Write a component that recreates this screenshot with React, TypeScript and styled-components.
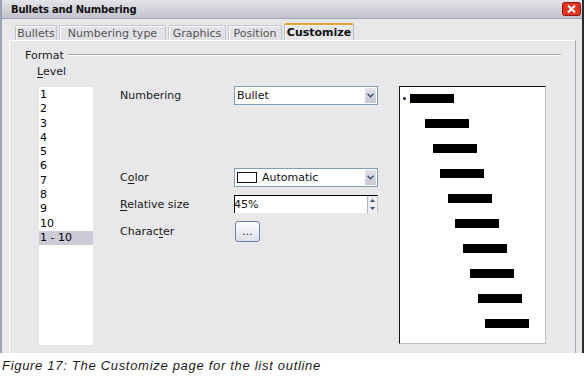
import React from "react";
import styled, { createGlobalStyle } from "styled-components";

const GlobalStyle = createGlobalStyle`
  html, body {
    margin: 0;
    padding: 0;
    background: #ffffff;
  }
  body {
    font-family: "DejaVu Sans", "Noto Sans", sans-serif;
    font-size: 11px;
    color: #1a1a1a;
  }
`;

const Page = styled.div`
  width: 585px;
  height: 383px;
  overflow: hidden;
`;

const Window = styled.div`
  box-sizing: border-box;
  width: 584px;
  height: 353px;
  border-left: 2px solid #9ca2b8;
  border-right: 2px solid #2a2a2a;
  background: #e8e8eb;
  display: flex;
  flex-direction: column;
`;

const TitleBar = styled.div`
  box-sizing: border-box;
  height: 19px;
  display: flex;
  align-items: center;
  justify-content: space-between;
  padding: 0 1px 0 9px;
  background: linear-gradient(#e4e4ea, #c2c2ce);
  border-bottom: 1px solid #a4a4b4;
  font-weight: bold;
  font-size: 10px;
  letter-spacing: -0.2px;
  color: #111;
`;

const CloseIcon = styled.svg`
  display: block;
  flex: none;
`;

const TabRow = styled.div`
  display: flex;
  align-items: flex-end;
  gap: 2px;
  height: 17px;
  margin-top: 4px;
  padding-left: 13px;
`;

const Tab = styled.div<{ $active?: boolean; $w: number }>`
  box-sizing: border-box;
  width: ${({ $w }) => $w}px;
  height: ${({ $active }) => ($active ? "17px" : "15px")};
  display: flex;
  align-items: center;
  justify-content: center;
  font-weight: ${({ $active }) => ($active ? "bold" : "normal")};
  color: ${({ $active }) => ($active ? "#111" : "#555")};
  background: ${({ $active }) => ($active ? "#e8e8eb" : "#e2e2e6")};
  border: 1px solid ${({ $active }) => ($active ? "#b8b8c0" : "#c4c4cc")};
  border-top: ${({ $active }) => ($active ? "2px solid #f0a030" : "1px solid #c4c4cc")};
  border-bottom: none;
  border-radius: 2px 2px 0 0;
  box-shadow: inset 1px 1px 0 #ffffff;
`;

const Panel = styled.div`
  flex: 1;
  margin: 0 6px 0 7px;
  border-top: 1px solid #ffffff;
  border-left: 1px solid #ffffff;
  border-right: 1px solid #a8a8b0;
  padding: 7px 14px 0 15px;
  display: flex;
  flex-direction: column;
`;

const FrameHeader = styled.div`
  display: flex;
  align-items: center;
  gap: 4px;
  height: 14px;
`;

const FrameLine = styled.div`
  flex: 1;
  border-top: 1px solid #a4a4a8;
  border-bottom: 1px solid #ffffff;
`;

const LevelLabel = styled.div`
  height: 14px;
  line-height: 14px;
  margin: 3px 0 0 12px;
`;

const MainRow = styled.div`
  display: flex;
  align-items: flex-start;
  margin-top: 7px;
`;

const LevelList = styled.div`
  width: 54px;
  height: 258px;
  margin: 1px 0 0 14px;
  padding-top: 1px;
  box-sizing: border-box;
  background: #ffffff;
`;

const LevelItem = styled.div<{ $selected?: boolean }>`
  height: 14.3px;
  line-height: 14.3px;
  padding-left: 1px;
  color: #000;
  background: ${({ $selected }) => ($selected ? "#cbcbd8" : "transparent")};
`;

const Form = styled.div`
  display: flex;
  flex-direction: column;
  margin-left: 27px;
  width: 258px;
`;

const FormRow = styled.div<{ $gap: number; $h: number }>`
  display: grid;
  grid-template-columns: 114px 144px;
  align-items: center;
  height: ${({ $h }) => $h}px;
  margin-top: ${({ $gap }) => $gap}px;
`;

const Mnemonic = styled.span`
  text-decoration: underline;
  text-underline-offset: 2px;
`;

const SelectBox = styled.div`
  box-sizing: border-box;
  height: 19px;
  border: 1px solid #7f9db9;
  background: #ffffff;
  display: flex;
  align-items: center;
  padding: 0 1px 0 2px;
`;

const SelectText = styled.div`
  flex: 1;
  display: flex;
  align-items: center;
  gap: 5px;
  color: #111;
`;

const Swatch = styled.div`
  box-sizing: border-box;
  width: 20px;
  height: 11px;
  border: 1px solid #111;
  background: #fff;
`;

const DropButton = styled.div`
  width: 11px;
  height: 15px;
  background: linear-gradient(#e4e4ec, #c8c8d6);
  display: flex;
  align-items: center;
  justify-content: center;
`;

const SpinBox = styled.div`
  box-sizing: border-box;
  height: 18px;
  border-top: 1px solid #000;
  border-left: 1px solid #000;
  border-right: 1px solid #c8c8cc;
  background: #ffffff;
  display: flex;
  align-items: center;
`;

const SpinText = styled.div`
  flex: 1;
  text-indent: -1px;
  color: #111;
`;

const SpinButtons = styled.div`
  width: 9px;
  height: 100%;
  display: flex;
  flex-direction: column;
  border-left: 1px solid #b4b4bc;
  background: #eeeef2;
`;

const SpinHalf = styled.div`
  flex: 1;
  display: flex;
  align-items: center;
  justify-content: center;
`;

const DotsButton = styled.div`
  box-sizing: border-box;
  width: 25px;
  height: 21px;
  margin-left: 1px;
  border: 1px solid #6c80a8;
  border-radius: 3px;
  background: linear-gradient(#ffffff, #dde0ea);
  display: flex;
  align-items: center;
  justify-content: center;
  font-size: 11px;
  color: #222;
`;

const Preview = styled.div`
  box-sizing: border-box;
  width: 147px;
  height: 258px;
  margin-left: 21px;
  background: #ffffff;
  border-top: 1px solid #111;
  border-left: 1px solid #111;
  border-right: 1px solid #c0c0c4;
  border-bottom: 1px solid #c0c0c4;
  padding-top: 7px;
  display: flex;
  flex-direction: column;
  gap: 16px;
`;

const PreviewLine = styled.div<{ $indent: number }>`
  display: flex;
  align-items: center;
  height: 9px;
  padding-left: ${({ $indent }) => $indent}px;
`;

const BulletDot = styled.div`
  width: 3px;
  height: 3px;
  margin-left: 3px;
  margin-right: 4px;
  border-radius: 50%;
  background: #102040;
`;

const Bar = styled.div`
  width: 44px;
  height: 9px;
  background: #000;
`;

const Caption = styled.div`
  margin-top: 6px;
  padding-left: 2px;
  height: 14px;
  line-height: 14px;
  font-family: "Liberation Sans", Arial, sans-serif;
  font-style: italic;
  font-size: 13px;
  letter-spacing: 0.7px;
  color: #1a1a1a;
`;

const Chevron = () => (
  <svg width="7" height="5" viewBox="0 0 7 5">
    <path d="M0.5 0.8 L3.5 3.8 L6.5 0.8" fill="none" stroke="#3a4a6a" strokeWidth="1.3" />
  </svg>
);

const levels = ["1", "2", "3", "4", "5", "6", "7", "8", "9", "10", "1 - 10"];
const tabs = [
  { label: "Bullets", w: 42 },
  { label: "Numbering type", w: 107 },
  { label: "Graphics", w: 58 },
  { label: "Position", w: 54 },
  { label: "Customize", w: 70 },
];

export default function App() {
  return (
    <Page>
      <GlobalStyle />
      <Window>
        <TitleBar>
          <span>Bullets and Numbering</span>
          <CloseIcon width="19" height="14" viewBox="0 0 19 14">
            <rect x="0.5" y="0.5" width="18" height="13" rx="2" fill="#e0321f" stroke="#901a10" />
            <path d="M6 3.5 L13 10.5 M13 3.5 L6 10.5" stroke="#ffffff" strokeWidth="2" />
          </CloseIcon>
        </TitleBar>
        <TabRow>
          {tabs.map((t) => (
            <Tab key={t.label} $w={t.w} $active={t.label === "Customize"}>
              {t.label}
            </Tab>
          ))}
        </TabRow>
        <Panel>
          <FrameHeader>
            <span>Format</span>
            <FrameLine />
          </FrameHeader>
          <LevelLabel>
            <Mnemonic>L</Mnemonic>evel
          </LevelLabel>
          <MainRow>
            <LevelList>
              {levels.map((l) => (
                <LevelItem key={l} $selected={l === "1 - 10"}>
                  {l}
                </LevelItem>
              ))}
            </LevelList>
            <Form>
              <FormRow $gap={0} $h={19}>
                <span>Numbering</span>
                <SelectBox>
                  <SelectText>Bullet</SelectText>
                  <DropButton>
                    <Chevron />
                  </DropButton>
                </SelectBox>
              </FormRow>
              <FormRow $gap={63} $h={19}>
                <span>
                  C<Mnemonic>o</Mnemonic>lor
                </span>
                <SelectBox>
                  <SelectText>
                    <Swatch />
                    Automatic
                  </SelectText>
                  <DropButton>
                    <Chevron />
                  </DropButton>
                </SelectBox>
              </FormRow>
              <FormRow $gap={8} $h={18}>
                <span>
                  <Mnemonic>R</Mnemonic>elative size
                </span>
                <SpinBox>
                  <SpinText>45%</SpinText>
                  <SpinButtons>
                    <SpinHalf>
                      <svg width="5" height="3" viewBox="0 0 5 3">
                        <path d="M0 3 L2.5 0 L5 3 Z" fill="#3a4a6a" />
                      </svg>
                    </SpinHalf>
                    <SpinHalf>
                      <svg width="5" height="3" viewBox="0 0 5 3">
                        <path d="M0 0 L2.5 3 L5 0 Z" fill="#3a4a6a" />
                      </svg>
                    </SpinHalf>
                  </SpinButtons>
                </SpinBox>
              </FormRow>
              <FormRow $gap={8} $h={21}>
                <span>
                  Charac<Mnemonic>t</Mnemonic>er
                </span>
                <DotsButton>...</DotsButton>
              </FormRow>
            </Form>
            <Preview>
              {levels.slice(0, 10).map((l, i) => (
                <PreviewLine key={l} $indent={i === 0 ? 0 : 25 + Math.round(7.5 * (i - 1))}>
                  {i === 0 && <BulletDot />}
                  <Bar />
                </PreviewLine>
              ))}
            </Preview>
          </MainRow>
        </Panel>
      </Window>
      <Caption>Figure 17: The Customize page for the list outline</Caption>
    </Page>
  );
}
